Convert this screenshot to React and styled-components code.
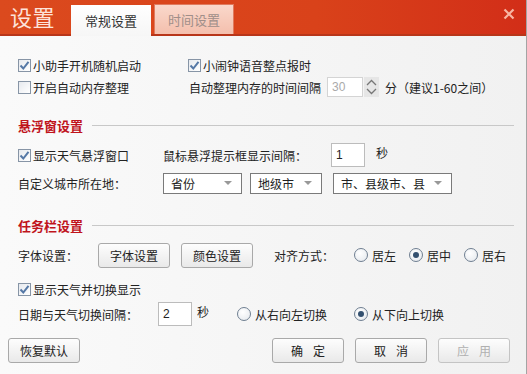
import React from "react";
import styled, { createGlobalStyle, css } from "styled-components";

const Global = createGlobalStyle`
  html, body { margin: 0; padding: 0; background: #fff; }
  body { font-family: "Noto Sans CJK SC", "Liberation Sans", sans-serif; font-size: 12px; color: #222; }
  * { box-sizing: border-box; }
`;

const Window = styled.div`
  width: 527px;
  height: 374px;
  display: flex;
  flex-direction: column;
  border-right: 1px solid #a4a4a4;
  background: linear-gradient(to right, #fafafa, #f1f1f1);
  overflow: hidden;
`;

const TitleBar = styled.div`
  height: 36px;
  flex: none;
  display: flex;
  align-items: flex-end;
  padding-left: 10px;
  background: linear-gradient(to right, #db4a1e, #d9421a 60%, #d22e18);
  border-bottom: 2px solid #b8361a;
  position: relative;
`;

const Title = styled.div`
  font-size: 22px;
  line-height: 22px;
  color: #fde3da;
  align-self: flex-start;
  margin-top: 5px;
  width: 61px;
  letter-spacing: 0.5px;
`;

const Tab = styled.div`
  width: 80px;
  height: 30px;
  margin-right: 3px;
  margin-bottom: -2px;
  display: flex;
  align-items: center;
  justify-content: center;
  font-size: 13px;
  ${(p) =>
    p.$active
      ? css`
          background: linear-gradient(#ffffff, #f6f6f6);
          color: #333;
          height: 31px;
        `
      : css`
          background: linear-gradient(#fad8cb, #f4bfad);
          color: #a08e89;
          border: 1px solid #e07a5e;
          border-bottom: none;
          margin-bottom: 0;
        `}
`;

const Close = styled.div`
  position: absolute;
  right: 9px;
  top: 6px;
  width: 16px;
  height: 16px;
`;

const Body = styled.div`
  flex: 1;
  display: flex;
  flex-direction: column;
  padding: 18px 0 0 18px;
`;

const Row = styled.div`
  display: flex;
  align-items: center;
  height: ${(p) => p.$h || 22}px;
  margin-top: ${(p) => p.$mt || 0}px;
`;

const Cell = styled.div`
  display: flex;
  align-items: center;
  width: ${(p) => (p.$w ? p.$w + "px" : "auto")};
  margin-left: ${(p) => p.$ml || 0}px;
  flex: none;
`;

const Text = styled.span`
  white-space: nowrap;
  color: ${(p) => p.$color || "#222"};
  margin-left: ${(p) => p.$ml || 0}px;
  ${(p) => p.$up && "position: relative; top: -3px;"}
`;

const Box = styled.span`
  width: 13px;
  height: 13px;
  border: 1px solid #8795a6;
  background: linear-gradient(135deg, #e6e9ee, #ffffff);
  display: inline-flex;
  align-items: center;
  justify-content: center;
  margin-right: 2px;
  flex: none;
`;

const Check = ({ checked, children }) => (
  <Cell>
    <Box>
      {checked && (
        <svg width="11" height="11" viewBox="0 0 11 11">
          <path d="M1.5 5.5 L4.3 8.5 L9.5 1.8" fill="none" stroke="#5578a6" strokeWidth="2" />
        </svg>
      )}
    </Box>
    <Text>{children}</Text>
  </Cell>
);

const RadioCircle = styled.span`
  width: 14px;
  height: 14px;
  border-radius: 50%;
  border: 1px solid #6f7f91;
  background: radial-gradient(circle at 40% 35%, #ffffff, #e3e7ec);
  display: inline-flex;
  align-items: center;
  justify-content: center;
  margin-right: 4px;
  flex: none;
  &::after {
    content: "";
    display: ${(p) => (p.$on ? "block" : "none")};
    width: 6px;
    height: 6px;
    border-radius: 50%;
    background: #33506f;
  }
`;

const Radio = ({ on, w, children }) => (
  <Cell $w={w}>
    <RadioCircle $on={on} />
    <Text>{children}</Text>
  </Cell>
);

const SectionHead = styled.div`
  display: flex;
  align-items: center;
  height: 20px;
  margin-top: ${(p) => p.$mt}px;
  padding-right: 12px;
  font-size: 13px;
  font-weight: bold;
  color: #c0141c;
  &::after {
    content: "";
    flex: 1;
    height: 1px;
    margin-left: 9px;
    background: #c8c8c8;
  }
`;

const Input = styled.div`
  width: ${(p) => p.$w || 34}px;
  height: ${(p) => p.$h || 24}px;
  border: 1px solid #bcbcbc;
  background: #fff;
  display: flex;
  align-items: center;
  padding-left: 4px;
  font-family: "Liberation Sans", sans-serif;
  font-size: 12px;
  color: ${(p) => (p.$disabled ? "#aaa" : "#222")};
  border-color: ${(p) => (p.$disabled ? "#d4d4d4" : "#bcbcbc")};
  margin-left: ${(p) => p.$ml || 0}px;
  flex: none;
`;

const Spinner = styled.div`
  width: 15px;
  height: 20px;
  margin-left: 1px;
  background: #e6e6e6;
  display: flex;
  align-items: center;
  justify-content: center;
`;

const Select = styled.div`
  width: ${(p) => p.$w}px;
  height: 21px;
  border: 1px solid #7a7a7a;
  background: #fff;
  margin-left: ${(p) => p.$ml || 0}px;
  display: flex;
  align-items: center;
  justify-content: space-between;
  padding: 0 9px 0 7px;
  font-size: 12px;
  flex: none;
  &::after {
    content: "";
    border-left: 4px solid transparent;
    border-right: 4px solid transparent;
    border-top: 4px solid #999;
  }
`;

const Button = styled.div`
  width: 72px;
  height: 25px;
  border: 1px solid #a9a9a9;
  border-radius: 3px;
  background: linear-gradient(#fdfdfd, #e9e9e9);
  display: flex;
  align-items: center;
  justify-content: center;
  font-size: 12px;
  color: ${(p) => (p.$disabled ? "#b0b0b0" : "#222")};
  border-color: ${(p) => (p.$disabled ? "#c4c4c4" : "#a9a9a9")};
  margin-left: ${(p) => p.$ml || 0}px;
  letter-spacing: ${(p) => (p.$spaced ? "10px" : "0")};
  text-indent: ${(p) => (p.$spaced ? "10px" : "0")};
  flex: none;
`;

const Footer = styled.div`
  display: flex;
  align-items: center;
  height: 25px;
  margin-top: 12px;
  margin-left: -10px;
`;

const Spacer = styled.div`
  flex: 1;
`;

export default function App() {
  return (
    <>
      <Global />
      <Window>
        <TitleBar>
          <Title>设置</Title>
          <Tab $active>常规设置</Tab>
          <Tab>时间设置</Tab>
          <Close>
            <svg width="16" height="16" viewBox="0 0 16 16">
              <path d="M3.5 3.5 L12.5 12.5 M12.5 3.5 L3.5 12.5" stroke="#f8b6a4" strokeWidth="2.2" />
            </svg>
          </Close>
        </TitleBar>
        <Body>
          <Row $h={22}>
            <Cell $w={170}>
              <Check checked>小助手开机随机启动</Check>
            </Cell>
            <Check checked>小闹钟语音整点报时</Check>
          </Row>
          <Row $h={22}>
            <Cell $w={171}>
              <Check>开启自动内存整理</Check>
            </Cell>
            <Text>自动整理内存的时间间隔</Text>
            <Input $w={36} $h={20} $ml={6} $disabled>30</Input>
            <Spinner>
              <svg width="13" height="18" viewBox="0 0 13 18">
                <path d="M2 7 L6.5 2.5 L11 7 M2 11 L6.5 15.5 L11 11" fill="none" stroke="#777" strokeWidth="1.3" />
              </svg>
            </Spinner>
            <Text $ml={6}>分（建议1-60之间）</Text>
          </Row>

          <SectionHead $mt={17}>悬浮窗设置</SectionHead>
          <Row $h={24} $mt={8}>
            <Cell $w={145}>
              <Check checked>显示天气悬浮窗口</Check>
            </Cell>
            <Text>鼠标悬浮提示框显示间隔：</Text>
            <Input $ml={24}>1</Input>
            <Text $ml={11} $up>秒</Text>
          </Row>
          <Row $h={22} $mt={5}>
            <Cell $w={145}>
              <Text>自定义城市所在地：</Text>
            </Cell>
            <Select $w={79}>省份</Select>
            <Select $w={72} $ml={8}>地级市</Select>
            <Select $w={119} $ml={11}>市、县级市、县</Select>
          </Row>

          <SectionHead $mt={21}>任务栏设置</SectionHead>
          <Row $h={26} $mt={7}>
            <Cell $w={80}>
              <Text>字体设置：</Text>
            </Cell>
            <Button>字体设置</Button>
            <Button $ml={11}>颜色设置</Button>
            <Cell $w={80} $ml={21}>
              <Text>对齐方式：</Text>
            </Cell>
            <Radio w={55}>居左</Radio>
            <Radio w={55} on>居中</Radio>
            <Radio>居右</Radio>
          </Row>
          <Row $h={20} $mt={11}>
            <Check checked>显示天气并切换显示</Check>
          </Row>
          <Row $h={24} $mt={3}>
            <Cell $w={140}>
              <Text>日期与天气切换间隔：</Text>
            </Cell>
            <Input>2</Input>
            <Text $ml={5} $up>秒</Text>
            <Cell $w={28} />
            <Radio w={117}>从右向左切换</Radio>
            <Radio on>从下向上切换</Radio>
          </Row>

          <Footer>
            <Button>恢复默认</Button>
            <Spacer />
            <Button $spaced>确定</Button>
            <Button $spaced $ml={11}>取消</Button>
            <Button $spaced $ml={11} $disabled>应用</Button>
            <Cell $w={16} />
          </Footer>
        </Body>
      </Window>
    </>
  );
}
